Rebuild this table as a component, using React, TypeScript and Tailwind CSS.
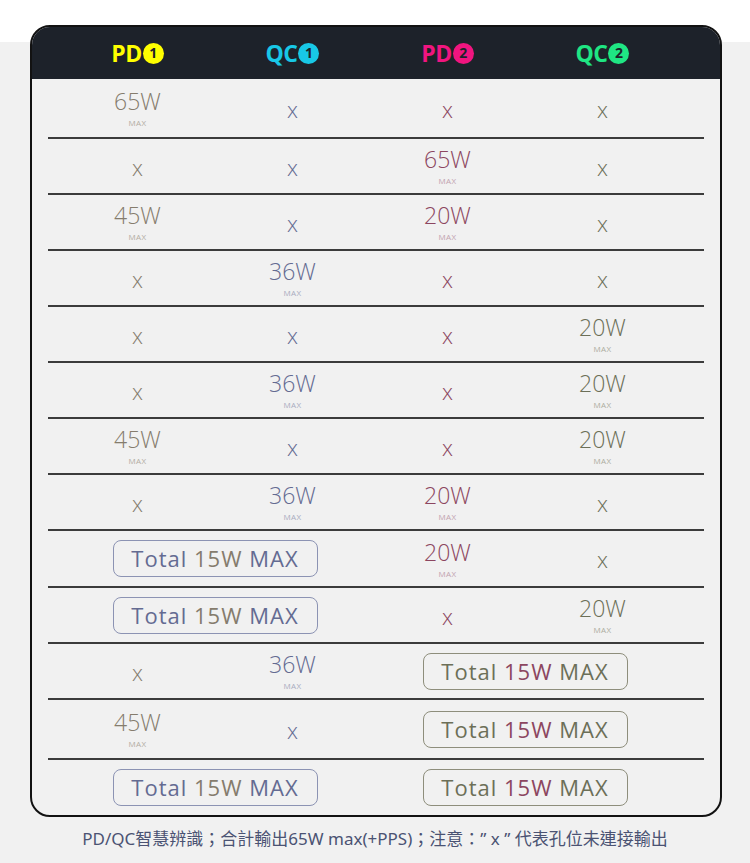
import React from 'react'

type Cell = string | { total: 'a' | 'b' }

const colText = ['text-[#857c6d]', 'text-[#646b92]', 'text-[#8c4660]', 'text-[#6c6f58]']
const colMax = ['text-[#b3ada3]', 'text-[#a9acbf]', 'text-[#c2a3b0]', 'text-[#adad9f]']

const rows: { h: string; cells: Cell[] }[] = [
  { h: 'h-[58px]', cells: ['65W', 'x', 'x', 'x'] },
  { h: 'h-[54px]', cells: ['x', 'x', '65W', 'x'] },
  { h: 'h-[54px]', cells: ['45W', 'x', '20W', 'x'] },
  { h: 'h-[54px]', cells: ['x', '36W', 'x', 'x'] },
  { h: 'h-[54px]', cells: ['x', 'x', 'x', '20W'] },
  { h: 'h-[54px]', cells: ['x', '36W', 'x', '20W'] },
  { h: 'h-[54px]', cells: ['45W', 'x', 'x', '20W'] },
  { h: 'h-[54px]', cells: ['x', '36W', '20W', 'x'] },
  { h: 'h-[55px]', cells: [{ total: 'a' }, '20W', 'x'] },
  { h: 'h-[54px]', cells: [{ total: 'a' }, 'x', '20W'] },
  { h: 'h-[54px]', cells: ['x', '36W', { total: 'b' }] },
  { h: 'h-[58px]', cells: ['45W', 'x', { total: 'b' }] },
  { h: 'h-[55px]', cells: [{ total: 'a' }, { total: 'b' }] },
]

const headers = [
  { label: 'PD', n: '1', text: 'text-[#ffff00]', bg: 'bg-[#ffff00]' },
  { label: 'QC', n: '1', text: 'text-[#18c8e6]', bg: 'bg-[#18c8e6]' },
  { label: 'PD', n: '2', text: 'text-[#f0157f]', bg: 'bg-[#f0157f]' },
  { label: 'QC', n: '2', text: 'text-[#1fe683]', bg: 'bg-[#1fe683]' },
]

const TotalBox = ({ kind }: { kind: 'a' | 'b' }) => {
  const blue = kind === 'a'
  return (
    <div className="col-span-2 flex items-center justify-center">
      <div
        className={`flex h-[37px] w-[205px] items-center justify-center rounded-[8px] border text-[22px] tracking-[1px] ${
          blue ? 'border-[#8c93b3] text-[#646b92]' : 'border-[#8e8e7c] text-[#6c6f58]'
        }`}
      >
        Total&nbsp;<span className={blue ? 'text-[#857c6d]' : 'text-[#8c4660]'}>15W</span>&nbsp;MAX
      </div>
    </div>
  )
}

const ValueCell = ({ value, col }: { value: string; col: number }) => {
  if (value === 'x') {
    return (
      <div className={`flex items-center justify-center pt-[2px] text-[22px] font-light ${colText[col]}`}>
        x
      </div>
    )
  }
  return (
    <div className="flex flex-col items-center justify-center">
      <span className={`text-[23px] font-light leading-[24px] ${colText[col]}`}>{value}</span>
      <span className={`mt-[5px] text-[8px] leading-[9px] tracking-[0.3px] ${colMax[col]}`}>MAX</span>
    </div>
  )
}

const App = () => {
  return (
    <div
      className="min-h-screen bg-[linear-gradient(to_bottom,#ffffff_42px,#f1f1f1_42px)] pt-[25px]"
      style={{ fontFamily: '"Open Sans", "Noto Sans", "Noto Sans CJK TC", sans-serif' }}
    >
      <div className="ml-[30px] w-[692px] overflow-hidden rounded-[20px] border-2 border-[#121212] bg-[#f1f1f1]">
        <div className="grid h-[52px] grid-cols-[repeat(4,155px)] items-center bg-[#1d222a] pl-[28px]">
          {headers.map((h, i) => (
            <div key={i} className="flex items-center justify-center">
              <span className={`text-[23px] font-bold leading-none tracking-[-0.5px] ${h.text}`}>{h.label}</span>
              <span
                className={`ml-[1px] flex h-[21px] w-[21px] items-center justify-center rounded-full text-[14px] font-bold leading-none text-[#1d222a] ${h.bg}`}
              >
                {h.n}
              </span>
            </div>
          ))}
        </div>

        {rows.map((r, ri) => (
          <div key={ri}>
            <div className={`grid grid-cols-[repeat(4,155px)] items-center pl-[28px] ${r.h}`}>
              {(() => {
                let col = 0
                return r.cells.map((c, ci) => {
                  if (typeof c === 'string') {
                    const el = <ValueCell key={ci} value={c} col={col} />
                    col += 1
                    return el
                  }
                  col += 2
                  return <TotalBox key={ci} kind={c.total} />
                })
              })()}
            </div>
            {ri < rows.length - 1 && <div className="mx-[16px] h-[2px] bg-[#3c3c3c]" />}
          </div>
        ))}
      </div>

      <p
        className="mt-[11px] text-center text-[17px] leading-[22px] text-[#4b5373]"
        style={{ fontFamily: '"Noto Sans", "Noto Sans CJK TC", sans-serif' }}
      >
        PD/QC智慧辨識；合計輸出65W max(+PPS)；注意：” x ” 代表孔位未連接輸出
      </p>
    </div>
  )
}

export default App
